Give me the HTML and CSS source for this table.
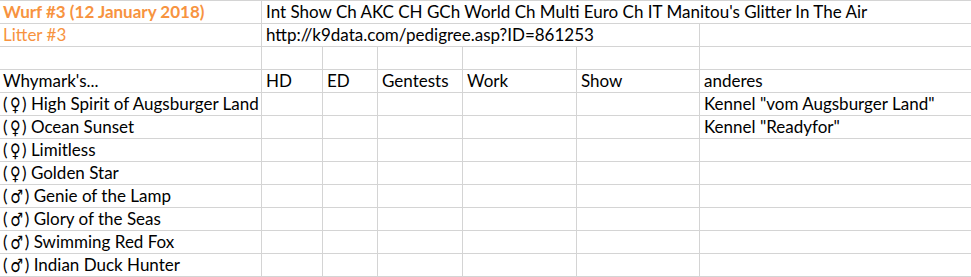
FILE: index.html
```html
<!DOCTYPE html>
<html lang="de">
<head>
<meta charset="utf-8">
<title>Wurf #3</title>
<link rel="stylesheet" href="styles.css">
</head>
<body>
<div class="sheet">
  <div class="row">
    <div class="cell accent bold">Wurf #3 (12 January 2018)</div>
    <div class="cell span-all">Int Show Ch AKC CH GCh World Ch Multi Euro Ch IT Manitou's Glitter In The Air</div>
  </div>
  <div class="row">
    <div class="cell accent">Litter #3</div>
    <div class="cell span-5">http://k9data.com/pedigree.asp?ID=861253</div>
    <div class="cell"></div>
  </div>
  <div class="row">
    <div class="cell"></div><div class="cell"></div><div class="cell"></div><div class="cell"></div><div class="cell"></div><div class="cell"></div><div class="cell"></div>
  </div>
  <div class="row">
    <div class="cell">Whymark's...</div><div class="cell">HD</div><div class="cell">ED</div><div class="cell">Gentests</div><div class="cell">Work</div><div class="cell">Show</div><div class="cell">anderes</div>
  </div>
  <div class="row">
    <div class="cell">(<span class="sym">♀</span>) High Spirit of Augsburger Land</div><div class="cell"></div><div class="cell"></div><div class="cell"></div><div class="cell"></div><div class="cell"></div><div class="cell">Kennel "vom Augsburger Land"</div>
  </div>
  <div class="row">
    <div class="cell">(<span class="sym">♀</span>) Ocean Sunset</div><div class="cell"></div><div class="cell"></div><div class="cell"></div><div class="cell"></div><div class="cell"></div><div class="cell">Kennel "Readyfor"</div>
  </div>
  <div class="row">
    <div class="cell">(<span class="sym">♀</span>) Limitless</div><div class="cell"></div><div class="cell"></div><div class="cell"></div><div class="cell"></div><div class="cell"></div><div class="cell"></div>
  </div>
  <div class="row">
    <div class="cell">(<span class="sym">♀</span>) Golden Star</div><div class="cell"></div><div class="cell"></div><div class="cell"></div><div class="cell"></div><div class="cell"></div><div class="cell"></div>
  </div>
  <div class="row">
    <div class="cell">(<span class="sym">♂</span>) Genie of the Lamp</div><div class="cell"></div><div class="cell"></div><div class="cell"></div><div class="cell"></div><div class="cell"></div><div class="cell"></div>
  </div>
  <div class="row">
    <div class="cell">(<span class="sym">♂</span>) Glory of the Seas</div><div class="cell"></div><div class="cell"></div><div class="cell"></div><div class="cell"></div><div class="cell"></div><div class="cell"></div>
  </div>
  <div class="row">
    <div class="cell">(<span class="sym">♂</span>) Swimming Red Fox</div><div class="cell"></div><div class="cell"></div><div class="cell"></div><div class="cell"></div><div class="cell"></div><div class="cell"></div>
  </div>
  <div class="row last">
    <div class="cell">(<span class="sym">♂</span>) Indian Duck Hunter</div><div class="cell"></div><div class="cell"></div><div class="cell"></div><div class="cell"></div><div class="cell"></div><div class="cell"></div>
  </div>
</div>
</body>
</html>
```
FILE: styles.css
```css
html, body {
  margin: 0;
  padding: 0;
  background: #fff;
}

.sheet {
  width: 971px;
  font-family: Lato, "Open Sans", sans-serif;
  font-size: 17px;
  color: #000;
}

.row {
  display: grid;
  grid-template-columns: 261px 61px 55px 85px 114px 123px 272px;
  height: 23px;
  box-sizing: border-box;
  border-top: 1px solid #d4d4d4;
}

.row.last {
  height: 24px;
  border-bottom: 1px solid #d4d4d4;
}

.cell {
  box-sizing: border-box;
  height: 22px;
  line-height: 22px;
  padding-left: 4px;
  white-space: nowrap;
  overflow: visible;
  border-left: 1px solid #d4d4d4;
}

.cell:first-child {
  border-left: none;
  padding-left: 3px;
}

.span-all {
  grid-column: 2 / 8;
}

.span-5 {
  grid-column: 2 / 7;
}

.accent {
  color: #f79340;
}

.bold {
  font-weight: bold;
}

/* gender signs: thin, full cap height */
.sym {
  font-family: "DejaVu Sans", sans-serif;
  font-size: 17px;
  line-height: 1;
  display: inline-block;
  transform: scale(0.85, 1.1);
  margin: 0 1px;
}
```
